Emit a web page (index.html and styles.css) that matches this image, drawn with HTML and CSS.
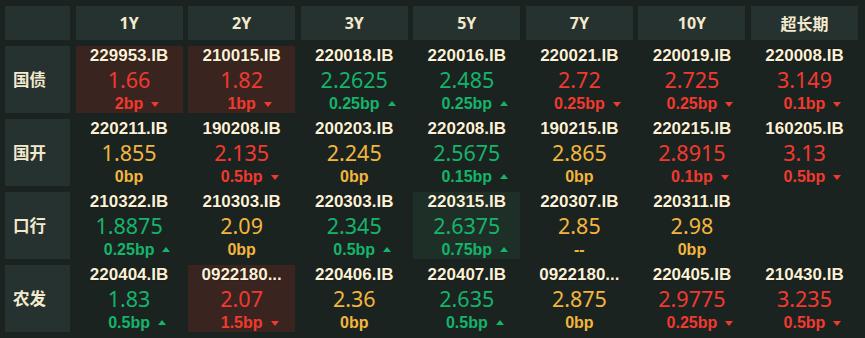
FILE: index.html
```html
<!DOCTYPE html>
<html lang="zh">
<head>
<meta charset="utf-8">
<link rel="stylesheet" href="styles.css">
</head>
<body>
<div class="board">
  <div class="head"></div>
  <div class="head">1Y</div>
  <div class="head">2Y</div>
  <div class="head">3Y</div>
  <div class="head">5Y</div>
  <div class="head">7Y</div>
  <div class="head">10Y</div>
  <div class="head">超长期</div>

  <div class="label">国债</div>
  <div class="cell hl-red"><div class="code">229953.IB</div><div class="val red">1.66</div><div class="bp red"><span class="bpt">2bp<i class="tri down"></i></span></div></div>
  <div class="cell hl-red"><div class="code">210015.IB</div><div class="val red">1.82</div><div class="bp red"><span class="bpt">1bp<i class="tri down"></i></span></div></div>
  <div class="cell"><div class="code">220018.IB</div><div class="val green">2.2625</div><div class="bp green"><span class="bpt">0.25bp<i class="tri up"></i></span></div></div>
  <div class="cell"><div class="code">220016.IB</div><div class="val green">2.485</div><div class="bp green"><span class="bpt">0.25bp<i class="tri up"></i></span></div></div>
  <div class="cell"><div class="code">220021.IB</div><div class="val red">2.72</div><div class="bp red"><span class="bpt">0.25bp<i class="tri down"></i></span></div></div>
  <div class="cell"><div class="code">220019.IB</div><div class="val red">2.725</div><div class="bp red"><span class="bpt">0.25bp<i class="tri down"></i></span></div></div>
  <div class="cell"><div class="code">220008.IB</div><div class="val red">3.149</div><div class="bp red"><span class="bpt">0.1bp<i class="tri down"></i></span></div></div>

  <div class="label">国开</div>
  <div class="cell"><div class="code">220211.IB</div><div class="val yellow">1.855</div><div class="bp yellow"><span class="bpt">0bp</span></div></div>
  <div class="cell"><div class="code">190208.IB</div><div class="val red">2.135</div><div class="bp red"><span class="bpt">0.5bp<i class="tri down"></i></span></div></div>
  <div class="cell"><div class="code">200203.IB</div><div class="val yellow">2.245</div><div class="bp yellow"><span class="bpt">0bp</span></div></div>
  <div class="cell"><div class="code">220208.IB</div><div class="val green">2.5675</div><div class="bp green"><span class="bpt">0.15bp<i class="tri up"></i></span></div></div>
  <div class="cell"><div class="code">190215.IB</div><div class="val yellow">2.865</div><div class="bp yellow"><span class="bpt">0bp</span></div></div>
  <div class="cell"><div class="code">220215.IB</div><div class="val red">2.8915</div><div class="bp red"><span class="bpt">0.1bp<i class="tri down"></i></span></div></div>
  <div class="cell"><div class="code">160205.IB</div><div class="val red">3.13</div><div class="bp red"><span class="bpt">0.5bp<i class="tri down"></i></span></div></div>

  <div class="label">口行</div>
  <div class="cell"><div class="code">210322.IB</div><div class="val green">1.8875</div><div class="bp green"><span class="bpt">0.25bp<i class="tri up"></i></span></div></div>
  <div class="cell"><div class="code">210303.IB</div><div class="val yellow">2.09</div><div class="bp yellow"><span class="bpt">0bp</span></div></div>
  <div class="cell"><div class="code">220303.IB</div><div class="val green">2.345</div><div class="bp green"><span class="bpt">0.5bp<i class="tri up"></i></span></div></div>
  <div class="cell hl-green"><div class="code">220315.IB</div><div class="val green">2.6375</div><div class="bp green"><span class="bpt">0.75bp<i class="tri up"></i></span></div></div>
  <div class="cell"><div class="code">220307.IB</div><div class="val yellow">2.85</div><div class="bp yellow"><span class="bpt">--</span></div></div>
  <div class="cell"><div class="code">220311.IB</div><div class="val yellow">2.98</div><div class="bp yellow"><span class="bpt">0bp</span></div></div>
  <div class="cell"></div>

  <div class="label">农发</div>
  <div class="cell"><div class="code">220404.IB</div><div class="val green">1.83</div><div class="bp green"><span class="bpt">0.5bp<i class="tri up"></i></span></div></div>
  <div class="cell hl-red"><div class="code">0922180...</div><div class="val red">2.07</div><div class="bp red"><span class="bpt">1.5bp<i class="tri down"></i></span></div></div>
  <div class="cell"><div class="code">220406.IB</div><div class="val yellow">2.36</div><div class="bp yellow"><span class="bpt">0bp</span></div></div>
  <div class="cell"><div class="code">220407.IB</div><div class="val green">2.635</div><div class="bp green"><span class="bpt">0.5bp<i class="tri up"></i></span></div></div>
  <div class="cell"><div class="code">0922180...</div><div class="val yellow">2.875</div><div class="bp yellow"><span class="bpt">0bp</span></div></div>
  <div class="cell"><div class="code">220405.IB</div><div class="val red">2.9775</div><div class="bp red"><span class="bpt">0.25bp<i class="tri down"></i></span></div></div>
  <div class="cell"><div class="code">210430.IB</div><div class="val red">3.235</div><div class="bp red"><span class="bpt">0.5bp<i class="tri down"></i></span></div></div>
</div>
</body>
</html>
```

FILE: styles.css
```css
html, body {
  margin: 0;
  padding: 0;
  background: #1b2321;
}
body {
  width: 865px;
  height: 338px;
  overflow: hidden;
  font-family: "Noto Sans", "Noto Sans CJK SC", sans-serif;
}
.board {
  display: grid;
  grid-template-columns: 65px repeat(7, 1fr);
  grid-template-rows: 34px repeat(4, 67.5px);
  column-gap: 5.6px;
  row-gap: 5.5px;
  padding: 6px 7px 0 5px;
}
.head {
  background: #263230;
  color: #f3e9cd;
  font-weight: 700;
  font-size: 16px;
  display: flex;
  align-items: center;
  justify-content: center;
}
.label {
  background: #263230;
  color: #f3e9cd;
  font-weight: 700;
  font-size: 16.5px;
  display: flex;
  align-items: center;
  padding-left: 8px;
}
.cell {
  display: flex;
  flex-direction: column;
  align-items: center;
  text-align: center;
}
.hl-red { background: #3a2420; }
.hl-green { background: #1e2f28; }
.code {
  font-family: "Liberation Sans", "Noto Sans", sans-serif;
  color: #fcf1d6;
  font-weight: 700;
  font-size: 17px;
  line-height: 19.6px;
  text-shadow: 0 0 1px #000;
}
.val {
  font-size: 21.5px;
  line-height: 29.5px;
}
.bp {
  font-family: "Liberation Sans", "Noto Sans", sans-serif;
  font-weight: 700;
  font-size: 16px;
  line-height: 18.4px;
}
.bpt {
  position: relative;
}
.tri {
  position: absolute;
  left: 100%;
  margin-left: 8px;
  width: 0;
  height: 0;
  border-left: 4px solid transparent;
  border-right: 4px solid transparent;
}
.tri.down {
  top: 7px;
  border-top: 5px solid #f2392e;
}
.tri.up {
  top: 6px;
  border-bottom: 5px solid #14b46a;
}
.red { color: #f2392e; }
.green { color: #14b46a; }
.yellow { color: #f2b53e; }
```
